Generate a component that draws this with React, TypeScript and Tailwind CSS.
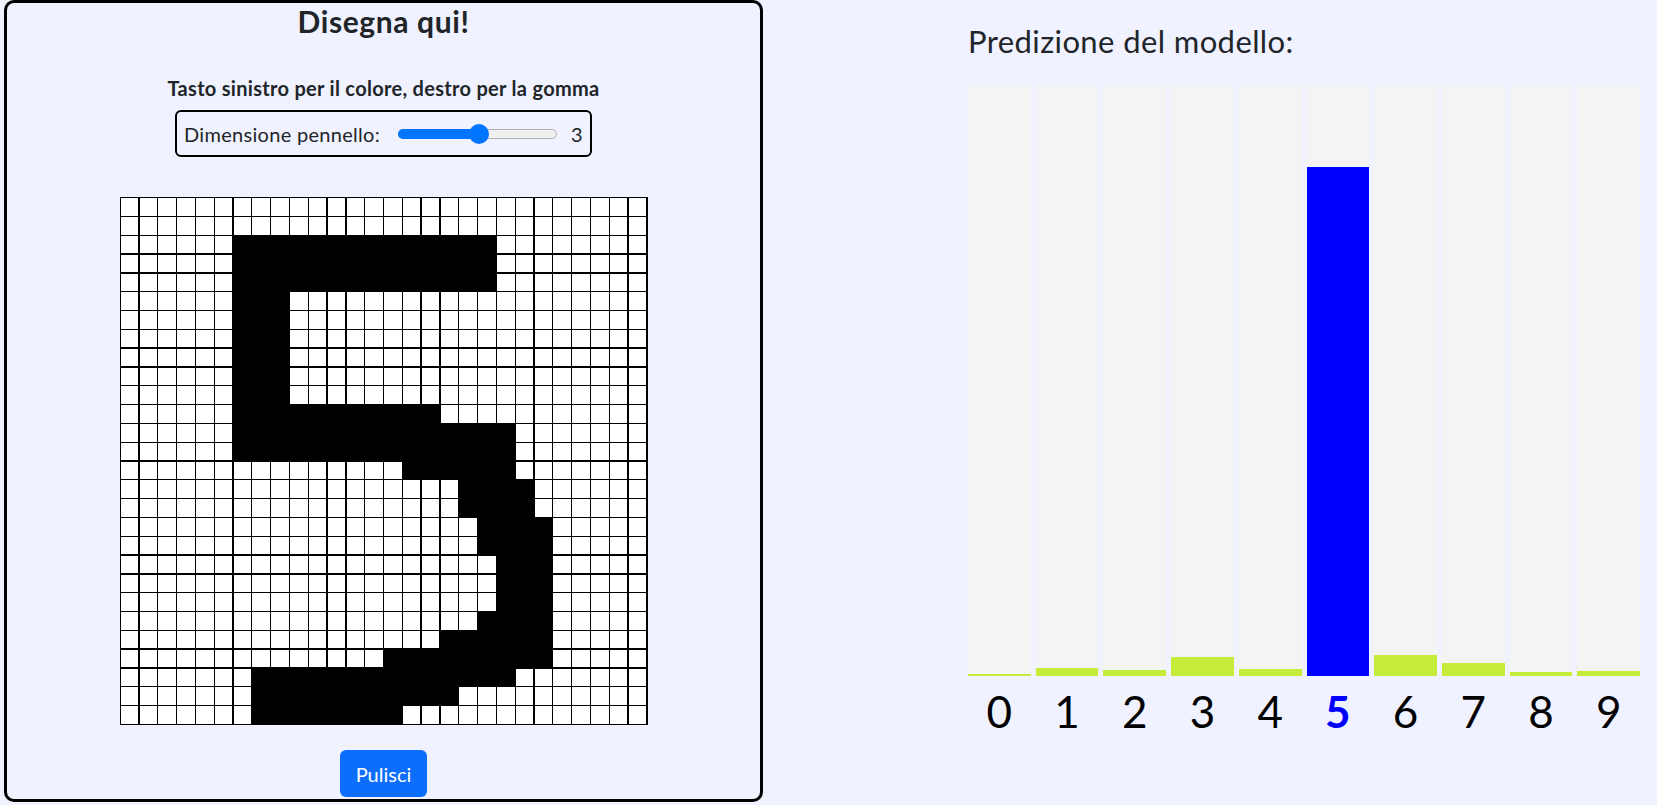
import * as React from 'react'

// 28x28 drawing: for each row, the [from, to] column ranges that are inked
const INK: Record<number, Array<[number, number]>> = {
  2: [[6, 19]],
  3: [[6, 19]],
  4: [[6, 19]],
  5: [[6, 8]],
  6: [[6, 8]],
  7: [[6, 8]],
  8: [[6, 8]],
  9: [[6, 8]],
  10: [[6, 8]],
  11: [[6, 16]],
  12: [[6, 20]],
  13: [[6, 20]],
  14: [[15, 20]],
  15: [[18, 21]],
  16: [[18, 21]],
  17: [[19, 22]],
  18: [[19, 22]],
  19: [[20, 22]],
  20: [[20, 22]],
  21: [[20, 22]],
  22: [[19, 22]],
  23: [[17, 22]],
  24: [[14, 22]],
  25: [[7, 20]],
  26: [[7, 17]],
  27: [[7, 14]],
}

const SIZE = 28
const BAR_HEIGHT = 591

// model output, one probability per digit
const PREDICTIONS = [0.0034, 0.0135, 0.0102, 0.032, 0.0118, 0.861, 0.036, 0.022, 0.0068, 0.0085]

function isInked(row: number, col: number) {
  const ranges = INK[row]
  if (!ranges) return false
  return ranges.some(([a, b]) => col >= a && col <= b)
}

function BrushSlider() {
  return (
    <div className="mt-[10px] flex h-[47px] w-[417px] items-center rounded-[6px] border-[2.5px] border-black pl-[7px]">
      <span className="w-[190px] whitespace-nowrap text-[20px] leading-[24px] tracking-[0.3px] text-[#212529]">
        Dimensione pennello:
      </span>
      <div className="relative ml-[24px] flex h-[10px] w-[159px] items-center">
        <div className="absolute inset-0 rounded-full border border-[#b2b2b2] bg-[#efefef]" />
        <div className="absolute left-0 top-0 h-[10px] w-[84px] rounded-full bg-[#0075ff]" />
        <div className="absolute left-[71px] top-[-5px] h-[20px] w-[20px] rounded-full bg-[#0075ff]" />
      </div>
      <span className="ml-[14px] text-[20px] leading-[24px] text-[#212529]">3</span>
    </div>
  )
}

function DrawingGrid() {
  const cells: React.ReactNode[] = []
  for (let r = 0; r < SIZE; r++) {
    for (let c = 0; c < SIZE; c++) {
      cells.push(
        <div key={`${r}-${c}`} className={isInked(r, c) ? 'bg-black' : 'bg-white'} />
      )
    }
  }
  return (
    <div className="mt-[40px] grid h-[528px] w-[528px] grid-cols-[repeat(28,1fr)] grid-rows-[repeat(28,1fr)] gap-[1.3px] bg-black p-[1.3px]">
      {cells}
    </div>
  )
}

function PredictionChart() {
  const best = PREDICTIONS.indexOf(Math.max(...PREDICTIONS))
  return (
    <div className="ml-[205px] flex w-[672px] flex-col">
      <h3 className="mt-[23px] text-[31px] leading-[37px] tracking-[0.4px] text-[#212529]">Predizione del modello:</h3>
      <div className="mt-[25px] grid grid-cols-10 gap-x-[5px]">
        {PREDICTIONS.map((p, i) => (
          <div key={i} className="flex h-[591px] flex-col justify-end bg-[#f4f4f5]">
            <div
              className={i === best ? 'bg-[#0000ff]' : 'bg-[#c5eb3b]'}
              style={{ height: Math.max(2, Math.round(p * BAR_HEIGHT)) }}
            />
          </div>
        ))}
      </div>
      <div className="mt-[9px] grid grid-cols-10 gap-x-[5px]">
        {PREDICTIONS.map((_, i) => (
          <div
            key={i}
            className={
              i === best
                ? 'text-center text-[44px] font-bold leading-[53px] text-[#0000ff]'
                : 'text-center text-[44px] leading-[53px] text-black'
            }
          >
            {i}
          </div>
        ))}
      </div>
    </div>
  )
}

export default function App() {
  return (
    <div className="flex h-[805px] w-full bg-[#f0f2ff] font-['Lato',sans-serif]">
      <div className="ml-[4px] flex h-[802px] w-[759px] shrink-0 flex-col items-center rounded-[10px] border-[3px] border-black">
        <h2 className="mt-[1px] text-[30px] font-bold leading-[35px] tracking-[0.6px] text-[#212529]">Disegna qui!</h2>
        <p className="mt-[37px] text-[20px] font-bold leading-[24px] tracking-[0.3px] text-[#212529]">
          Tasto sinistro per il colore, destro per la gomma
        </p>
        <BrushSlider />
        <DrawingGrid />
        <button
          type="button"
          className="mt-[25px] h-[47px] w-[87px] rounded-[6px] bg-[#0d6efd] text-[20px] leading-[24px] text-white"
        >
          Pulisci
        </button>
      </div>
      <PredictionChart />
    </div>
  )
}
